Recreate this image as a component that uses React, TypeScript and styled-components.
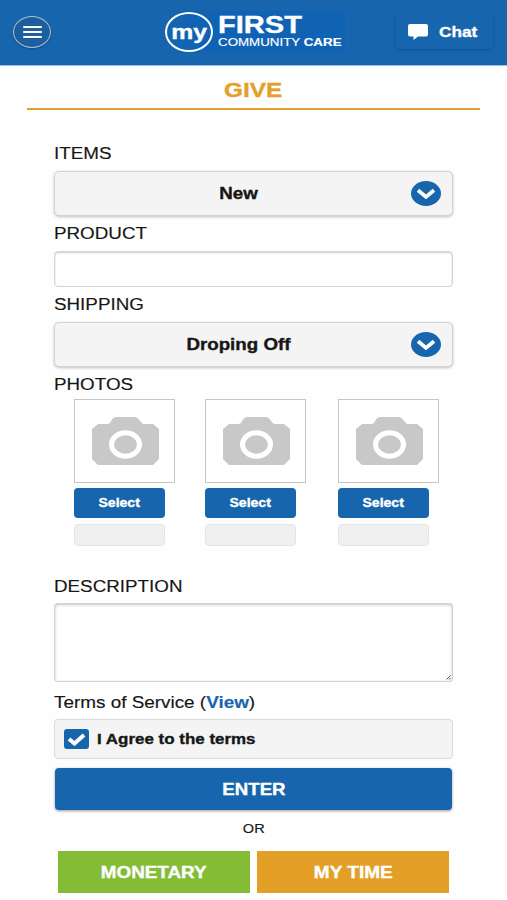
import React from "react";
import styled, { createGlobalStyle } from "styled-components";

const BLUE = "#1765ad";
const ORANGE = "#e3a02a";

const GlobalStyle = createGlobalStyle`
  * { box-sizing: border-box; }
  body {
    margin: 0;
    background: #fefefe;
    color: #161616;
    font-family: "Liberation Sans", Arial, sans-serif;
    overflow: hidden;
  }
  button { font: inherit; border: 0; padding: 0; margin: 0; }
`;

const Wide = styled.span<{ $size: number; $stretch?: number; $bold?: boolean; $left?: boolean }>`
  display: inline-block;
  font-size: ${(p) => p.$size}px;
  font-weight: ${(p) => (p.$bold ? 700 : 400)};
  -webkit-text-stroke: ${(p) => (p.$bold ? 0.35 : 0.15)}px currentColor;
  line-height: 1;
  white-space: nowrap;
  transform: scaleX(${(p) => p.$stretch ?? 1.185});
  transform-origin: ${(p) => (p.$left ? "left" : "center")} center;
`;

const Page = styled.div`
  width: 507px;
  height: 900px;
  overflow: hidden;
`;

const Header = styled.header`
  height: 66px;
  background: ${BLUE};
  border-bottom: 1px solid #8fc3ea;
  display: grid;
  grid-template-columns: 152px 231px 97px;
  padding: 0 0 0 13px;
`;

const MenuButton = styled.button`
  width: 38px;
  height: 32px;
  margin-top: 16px;
  border: 1px solid #a9bfd8;
  border-radius: 50%;
  background: #1b5f9f;
  box-shadow: 0 1px 2px rgba(0, 0, 0, 0.25);
  display: flex;
  flex-direction: column;
  align-items: center;
  justify-content: center;
  gap: 3px;
`;

const MenuBar = styled.span`
  width: 19px;
  height: 2px;
  border-radius: 1px;
  background: #fff;
`;

const Logo = styled.div`
  display: flex;
  width: 180px;
  height: 42px;
  margin-top: 11px;
  background: linear-gradient(90deg, ${BLUE}, #1063b4 15%);
`;

const LogoOval = styled.div`
  width: 48px;
  height: 40px;
  margin-top: 1px;
  border: 2px solid #fff;
  border-radius: 50%;
  color: #fff;
  display: flex;
  align-items: center;
  justify-content: center;
  padding-bottom: 2px;
`;

const LogoWords = styled.div`
  display: flex;
  flex-direction: column;
  align-items: flex-start;
  padding: 2px 0 0 5px;
  color: #fff;
`;

const LogoSub = styled.div`
  line-height: 1;
  display: flex;
`;

const ChatButton = styled.button`
  height: 35px;
  margin-top: 14px;
  border-radius: 4px;
  background: ${BLUE};
  box-shadow: 0 1px 3px rgba(0, 0, 0, 0.2);
  color: #fff;
  display: flex;
  align-items: center;
  padding-left: 12px;
  gap: 11px;
`;

const Title = styled.h1`
  margin: 0 27px;
  height: 44px;
  padding-top: 13px;
  border-bottom: 2px solid ${ORANGE};
  color: ${ORANGE};
  display: flex;
  justify-content: center;
  align-items: flex-start;
`;

const Form = styled.main`
  width: 399px;
  margin: 0 auto;
  display: flex;
  flex-direction: column;
`;

const Label = styled.label<{ $height: number; $top: number }>`
  height: ${(p) => p.$height}px;
  padding-top: ${(p) => p.$top}px;
  line-height: 1;
`;

const SelectBox = styled.div`
  height: 45px;
  border: 1px solid #d3d3d3;
  border-radius: 5px;
  background: #f4f4f4;
  box-shadow: 0 1px 3px rgba(0, 0, 0, 0.24);
  display: grid;
  grid-template-columns: 11px 345px 30px;
  align-items: center;
  justify-items: center;
`;

const SelectText = styled.span`
  grid-column: 2;
  line-height: 1;
`;

const TextInput = styled.input`
  display: block;
  width: 399px;
  height: 36px;
  border: 1px solid #d4d4d4;
  border-radius: 4px;
  background: #fff;
  box-shadow: inset 0 1px 2px rgba(0, 0, 0, 0.2);
  outline: 0;
`;

const TextArea = styled.textarea`
  display: block;
  width: 399px;
  height: 79px;
  border: 1px solid #d2d2d2;
  border-radius: 3px;
  background: #fff;
  box-shadow: inset 0 1px 3px rgba(0, 0, 0, 0.24);
  outline: 0;
  resize: none;
`;

const AreaWrap = styled.div`
  position: relative;
`;

const Grip = styled.svg`
  position: absolute;
  right: 2px;
  bottom: 2px;
`;

const Photos = styled.div`
  display: grid;
  grid-template-columns: 131px 133px 102px;
  padding-left: 20px;
  height: 175px;
`;

const Photo = styled.div`
  display: flex;
  flex-direction: column;
`;

const Thumb = styled.div`
  width: 101px;
  height: 84px;
  border: 1px solid #c6c6c6;
  background: #fff;
  padding: 17px 0 0 17px;
`;

const PickButton = styled.button`
  width: 91px;
  height: 30px;
  margin-top: 5px;
  border-radius: 4px;
  background: ${BLUE};
  color: #fff;
  display: flex;
  align-items: center;
  justify-content: center;
  padding-bottom: 1px;
`;

const FileSlot = styled.div`
  width: 91px;
  height: 22px;
  margin-top: 6px;
  border: 1px solid #e4e4e4;
  border-radius: 4px;
  background: #f0f0f0;
`;

const Terms = styled.div`
  height: 37px;
  padding-top: 13px;
  line-height: 1;
`;

const TermsLink = styled.a`
  color: ${BLUE};
  font-weight: 700;
`;

const Agree = styled.label`
  height: 40px;
  border: 1px solid #dadada;
  border-radius: 4px;
  background: #f4f4f4;
  display: flex;
  align-items: center;
  gap: 8px;
  padding: 0 0 1px 9px;
`;

const CheckBox = styled.span`
  width: 25px;
  height: 20px;
  margin-top: 1px;
  border-radius: 3px;
  background: ${BLUE};
  display: flex;
  align-items: center;
  justify-content: center;
`;

const EnterButton = styled.button`
  height: 42px;
  margin: 9px 1px 0;
  border-radius: 4px;
  background: ${BLUE};
  box-shadow: 0 1px 3px rgba(0, 0, 0, 0.4);
  color: #fff;
  display: flex;
  align-items: center;
  justify-content: center;
`;

const Or = styled.div`
  height: 41px;
  padding-top: 12px;
  display: flex;
  justify-content: center;
  align-items: flex-start;
`;

const Actions = styled.div`
  display: grid;
  grid-template-columns: 192px 192px;
  gap: 7px;
  padding-left: 4px;
`;

const ActionButton = styled.button<{ $color: string }>`
  height: 42px;
  background: ${(p) => p.$color};
  color: #fff;
  display: flex;
  align-items: center;
  justify-content: center;
`;

const Chevron = () => (
  <svg width="30" height="25" viewBox="0 0 30 25">
    <ellipse cx="15" cy="12.5" rx="15" ry="12.5" fill={BLUE} />
    <path d="M7 9.300 L15 15.900 L23 9.300" fill="none" stroke="#fff" strokeWidth="3.8" />
  </svg>
);

const Camera = () => (
  <svg width="67" height="48" viewBox="0 0 67 48">
    <path
      d="M6 7H15Q18 7 18.500 5L20 2.500Q21.500 0 24 0H43Q45.500 0 47 2.500L49 5Q49.500 7 52 7H61L67 12V42L61 48H6L0 42V12Z"
      fill="#c8c8c8"
    />
    <ellipse cx="33.500" cy="27.500" rx="14" ry="11.700" fill="#c8c8c8" stroke="#fff" strokeWidth="5" />
  </svg>
);

const Select = ({ value }: { value: string }) => (
  <SelectBox>
    <SelectText>
      <Wide $size={16} $stretch={1.17} $bold>{value}</Wide>
    </SelectText>
    <Chevron />
  </SelectBox>
);

const FieldLabel = ({ text, height, top }: { text: string; height: number; top: number }) => (
  <Label $height={height} $top={top}>
    <Wide $size={16} $stretch={1.175} $left>{text}</Wide>
  </Label>
);

export default function App() {
  return (
    <Page>
      <GlobalStyle />
      <Header>
        <MenuButton aria-label="Menu">
          <MenuBar />
          <MenuBar />
          <MenuBar />
        </MenuButton>
        <Logo>
          <LogoOval>
            <Wide $size={21} $stretch={1.18} $bold>my</Wide>
          </LogoOval>
          <LogoWords>
            <Wide $size={24} $stretch={1.21} $bold $left>FIRST</Wide>
            <LogoSub>
              <Wide $size={11.5} $stretch={1.16} $left>
                COMMUNITY <b>CARE</b>
              </Wide>
            </LogoSub>
          </LogoWords>
        </Logo>
        <ChatButton>
          <svg width="20" height="16" viewBox="0 0 20 16">
            <path d="M2 0H18Q20 0 20 2V10.500Q20 12.500 18 12.500H10L5.500 16V12.500H2Q0 12.500 0 10.500V2Q0 0 2 0Z" fill="#fff" />
          </svg>
          <Wide $size={15.5} $stretch={1.11} $bold $left>Chat</Wide>
        </ChatButton>
      </Header>
      <Title>
        <Wide $size={21} $stretch={1.16} $bold>GIVE</Wide>
      </Title>
      <Form>
        <FieldLabel text="ITEMS" height={61} top={36} />
        <Select value="New" />
        <FieldLabel text="PRODUCT" height={35} top={10} />
        <TextInput />
        <FieldLabel text="SHIPPING" height={35} top={10} />
        <Select value="Droping Off" />
        <FieldLabel text="PHOTOS" height={32} top={10} />
        <Photos>
          {[0, 1, 2].map((n) => (
            <Photo key={n}>
              <Thumb>
                <Camera />
              </Thumb>
              <PickButton>
                <Wide $size={13} $stretch={1.08} $bold>Select</Wide>
              </PickButton>
              <FileSlot />
            </Photo>
          ))}
        </Photos>
        <FieldLabel text="DESCRIPTION" height={29} top={5} />
        <AreaWrap>
          <TextArea />
          <Grip width="5" height="5" viewBox="0 0 5 5">
            <path d="M0.500 4.500L4.500 0.500M3 4.500L4.500 3" stroke="#555" fill="none" />
          </Grip>
        </AreaWrap>
        <Terms>
          <Wide $size={16} $stretch={1.18} $left>
            Terms of Service (<TermsLink>View</TermsLink>)
          </Wide>
        </Terms>
        <Agree>
          <CheckBox>
            <svg width="19" height="14" viewBox="0 0 19 14">
              <path d="M2 7L7.500 11.500L17 3" fill="none" stroke="#fff" strokeWidth="4" />
            </svg>
          </CheckBox>
          <Wide $size={15} $stretch={1.13} $bold $left>I Agree to the terms</Wide>
        </Agree>
        <EnterButton>
          <Wide $size={16.5} $stretch={1.13} $bold>ENTER</Wide>
        </EnterButton>
        <Or>
          <Wide $size={13} $stretch={1.12}>OR</Wide>
        </Or>
        <Actions>
          <ActionButton $color="#83bd38">
            <Wide $size={17} $stretch={1.11} $bold>MONETARY</Wide>
          </ActionButton>
          <ActionButton $color="#e49f26">
            <Wide $size={17} $stretch={1.12} $bold>MY TIME</Wide>
          </ActionButton>
        </Actions>
      </Form>
    </Page>
  );
}
